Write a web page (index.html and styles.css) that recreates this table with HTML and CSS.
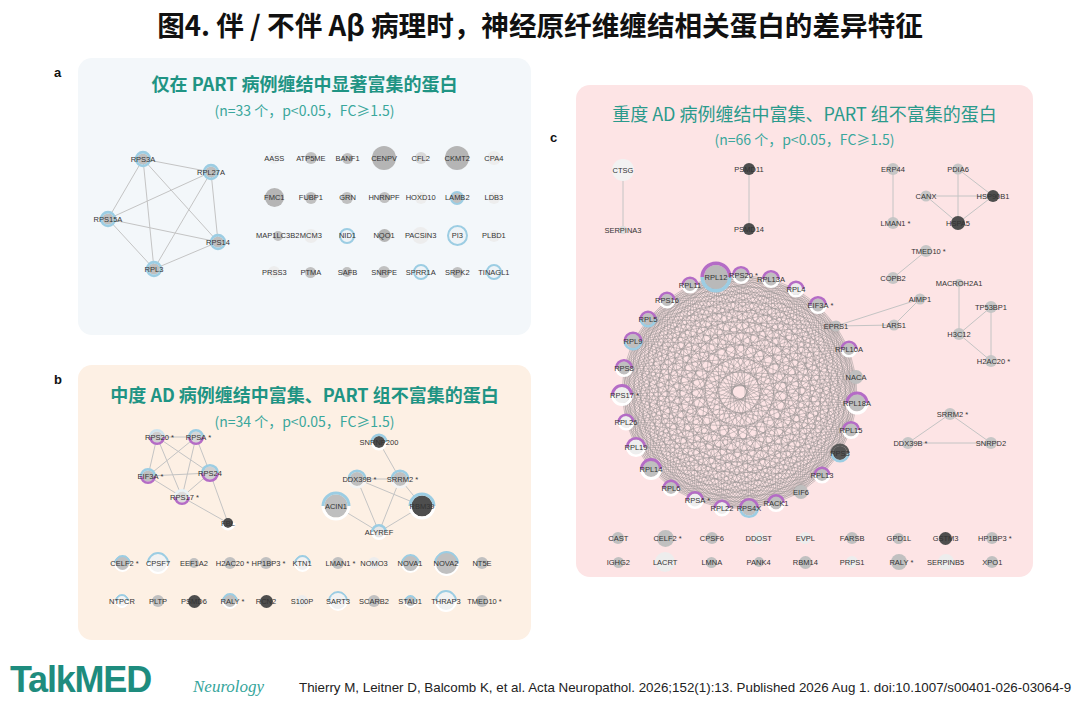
FILE: index.html
```html
<!DOCTYPE html>
<html lang="zh-CN">
<head>
<meta charset="utf-8">
<title>图4 伴/不伴 Aβ 病理时神经原纤维缠结相关蛋白的差异特征</title>
<link rel="stylesheet" href="styles.css">
</head>
<body>
<h1 class="fig-title">图4. 伴 / 不伴 Aβ 病理时，神经原纤维缠结相关蛋白的差异特征</h1>
<main class="figure">
  <div class="col col-left">
    <section class="panel">
      <span class="plabel">a</span>
      <div class="card card-a">
        <header class="card-head head-a">
          <h2 class="ptitle bold">仅在 PART 病例缠结中显著富集的蛋白</h2>
          <p class="psub">(n=33 个，p&lt;0.05，FC≥1.5)</p>
        </header>
        <div class="body-a">
          <svg class="net" id="net-a" width="178" height="215" viewBox="78 120 178 215"></svg>
          <div class="grid grid-a">
            <div class="node"><i class="dot f0 d12"></i><span>AASS</span></div>
            <div class="node"><i class="dot g d12"></i><span>ATP5ME</span></div>
            <div class="node"><i class="dot g d11"></i><span>BANF1</span></div>
            <div class="node"><i class="dot g2 d24"></i><span>CENPV</span></div>
            <div class="node"><i class="dot l d12"></i><span>CFL2</span></div>
            <div class="node"><i class="dot g2 d24"></i><span>CKMT2</span></div>
            <div class="node"><i class="dot f d14"></i><span>CPA4</span></div>
            <div class="node"><i class="dot g2 d19"></i><span>FMC1</span></div>
            <div class="node"><i class="dot g d12"></i><span>FUBP1</span></div>
            <div class="node"><i class="dot g d12"></i><span>GRN</span></div>
            <div class="node"><i class="dot g d11"></i><span>HNRNPF</span></div>
            <div class="node"><i class="dot f d12"></i><span>HOXD10</span></div>
            <div class="node"><i class="dot g ring d14"></i><span>LAMB2</span></div>
            <div class="node"><i class="dot f d12"></i><span>LDB3</span></div>
            <div class="node"><i class="dot g d10"></i><span>MAP1LC3B2</span></div>
            <div class="node"><i class="dot f d14"></i><span>MCM3</span></div>
            <div class="node"><i class="dot wb ring d16"></i><span>NID1</span></div>
            <div class="node"><i class="dot g2 d13"></i><span>NQO1</span></div>
            <div class="node"><i class="dot f d17"></i><span>PACSIN3</span></div>
            <div class="node"><i class="dot wb ring d21"></i><span>PI3</span></div>
            <div class="node"><i class="dot f d12"></i><span>PLBD1</span></div>
            <div class="node"><i class="dot f d12"></i><span>PRSS3</span></div>
            <div class="node"><i class="dot g d11"></i><span>PTMA</span></div>
            <div class="node"><i class="dot g d10"></i><span>SAFB</span></div>
            <div class="node"><i class="dot g d12"></i><span>SNRPE</span></div>
            <div class="node"><i class="dot wb ring d16"></i><span>SPRR1A</span></div>
            <div class="node"><i class="dot g d11"></i><span>SRPK2</span></div>
            <div class="node"><i class="dot wb ring d16"></i><span>TINAGL1</span></div>
          </div>
        </div>
      </div>
    </section>

    <section class="panel">
      <span class="plabel">b</span>
      <div class="card card-b">
        <header class="card-head head-b">
          <h2 class="ptitle bold">中度 AD 病例缠结中富集、PART 组不富集的蛋白</h2>
          <p class="psub">(n=34 个，p&lt;0.05，FC≥1.5)</p>
        </header>
        <svg class="net" id="net-b" width="453" height="113" viewBox="78 431 453 113"></svg>
        <div class="grid grid-b">
          <div class="node"><i class="dot g half d17"></i><span>CELF2<b class="star"> *</b></span></div>
          <div class="node"><i class="dot w half d22"></i><span>CPSF7</span></div>
          <div class="node"><i class="dot g d10"></i><span>EEF1A2</span></div>
          <div class="node"><i class="dot g d12"></i><span>H2AC20<b class="star"> *</b></span></div>
          <div class="node"><i class="dot g d12"></i><span>HP1BP3<b class="star"> *</b></span></div>
          <div class="node"><i class="dot w half d17"></i><span>KTN1</span></div>
          <div class="node"><i class="dot g d12"></i><span>LMAN1<b class="star"> *</b></span></div>
          <div class="node"><i class="dot f d12"></i><span>NOMO3</span></div>
          <div class="node"><i class="dot g half d19"></i><span>NOVA1</span></div>
          <div class="node"><i class="dot g half d25"></i><span>NOVA2</span></div>
          <div class="node"><i class="dot g d12"></i><span>NT5E</span></div>
          <div class="node"><i class="dot w half d14"></i><span>NTPCR</span></div>
          <div class="node"><i class="dot g d12"></i><span>PLTP</span></div>
          <div class="node"><i class="dot k d13"></i><span>PSMD6</span></div>
          <div class="node"><i class="dot g half d16"></i><span>RALY<b class="star"> *</b></span></div>
          <div class="node"><i class="dot k d13"></i><span>RCN2</span></div>
          <div class="node"><i class="dot f d12"></i><span>S100P</span></div>
          <div class="node"><i class="dot w half d20"></i><span>SART3</span></div>
          <div class="node"><i class="dot g d12"></i><span>SCARB2</span></div>
          <div class="node"><i class="dot g half d13"></i><span>STAU1</span></div>
          <div class="node"><i class="dot w half d22"></i><span>THRAP3</span></div>
          <div class="node"><i class="dot g d12"></i><span>TMED10<b class="star"> *</b></span></div>
        </div>
      </div>
    </section>
  </div>

  <div class="col col-right">
    <section class="panel">
      <span class="plabel plabel-c">c</span>
      <div class="card card-c">
        <header class="card-head head-c">
          <h2 class="ptitle">重度 AD 病例缠结中富集、PART 组不富集的蛋白</h2>
          <p class="psub">(n=66 个，p&lt;0.05，FC≥1.5)</p>
        </header>
        <svg class="net" id="net-c" width="457" height="377" viewBox="576 149 457 377"></svg>
        <div class="grid grid-c">
          <div class="node"><i class="dot g d12"></i><span>CAST</span></div>
          <div class="node"><i class="dot g d17"></i><span>CELF2<b class="star"> *</b></span></div>
          <div class="node"><i class="dot g d12"></i><span>CPSF6</span></div>
          <div class="node"><i class="dot f d12"></i><span>DDOST</span></div>
          <div class="node"><i class="dot f d12"></i><span>EVPL</span></div>
          <div class="node"><i class="dot g d12"></i><span>FARSB</span></div>
          <div class="node"><i class="dot g d11"></i><span>GPD1L</span></div>
          <div class="node"><i class="dot k d13"></i><span>GSTM3</span></div>
          <div class="node"><i class="dot g d12"></i><span>HP1BP3<b class="star"> *</b></span></div>
          <div class="node"><i class="dot g d11"></i><span>IGHG2</span></div>
          <div class="node"><i class="dot f d20"></i><span>LACRT</span></div>
          <div class="node"><i class="dot g d11"></i><span>LMNA</span></div>
          <div class="node"><i class="dot g d10"></i><span>PANK4</span></div>
          <div class="node"><i class="dot g d13"></i><span>RBM14</span></div>
          <div class="node"><i class="dot f d12"></i><span>PRPS1</span></div>
          <div class="node"><i class="dot g d16"></i><span>RALY<b class="star"> *</b></span></div>
          <div class="node"><i class="dot f d16"></i><span>SERPINB5</span></div>
          <div class="node"><i class="dot g d12"></i><span>XPO1</span></div>
        </div>
      </div>
    </section>
  </div>
</main>
<footer class="footer">
  <div class="logo">TalkMED</div>
  <div class="brand">Neurology</div>
  <p class="cite">Thierry M, Leitner D, Balcomb K, et al. Acta Neuropathol. 2026;152(1):13. Published 2026 Aug 1. doi:10.1007/s00401-026-03064-9</p>
</footer>
<script src="script.js"></script>
</body>
</html>
```

FILE: styles.css
```css
html, body {
  margin: 0;
  padding: 0;
  background: #ffffff;
}
body {
  width: 1080px;
  height: 714px;
  overflow: hidden;
  font-family: "Noto Sans CJK SC", "Noto Sans", sans-serif;
  color: #111;
}
.fig-title {
  margin: 0;
  height: 48px;
  line-height: 48px;
  text-align: center;
  font-size: 27.6px;
  font-weight: 700;
  color: #111;
}
.figure {
  display: flex;
  gap: 17px;
  margin-top: 10px;
  padding-left: 52px;
}
.col {
  display: flex;
  flex-direction: column;
}
.col-left { gap: 30px; }
.col-right { padding-top: 27px; }
.panel {
  display: flex;
}
.plabel {
  width: 24px;
  padding: 7px 0 0 2px;
  font: 700 13px/16px "Liberation Sans", Arial, sans-serif;
  color: #111;
}
.plabel-c {
  width: 26px;
  padding-top: 45px;
}
.card {
  box-sizing: border-box;
  border-radius: 14px;
  display: flex;
  flex-direction: column;
}
.card-a { width: 453px; height: 277px; background: #f3f7fa; }
.card-b { width: 453px; height: 275px; background: #fdf0e4; }
.card-c { width: 457px; height: 492px; background: #fde4e5; }

.card-head { text-align: center; }
.head-a { padding-top: 14px; height: 48px; }
.head-b { padding-top: 18px; height: 48px; }
.head-c { padding-top: 17px; height: 47px; }
.ptitle {
  margin: 0;
  font-size: 18px;
  line-height: 22px;
  font-weight: 400;
  color: #2a9a8c;
}
.ptitle.bold {
  font-weight: 700;
  color: #1f9484;
}
.psub {
  margin: 6px 0 0;
  font-size: 14px;
  line-height: 20px;
  color: #3aa79c;
}
.head-c .psub { margin-top: 5px; }

.net {
  display: block;
  overflow: visible;
  flex: none;
}
.body-a {
  display: flex;
}
.grid {
  display: grid;
}
.grid-a {
  padding-top: 18px;
  grid-template-columns: repeat(7, 36.6px);
  grid-template-rows: 40px 39px 37px 36px;
}
.grid-b {
  margin-left: 26px;
  grid-template-columns: repeat(11, 36px);
  grid-template-rows: repeat(2, 38px);
}
.grid-c {
  margin-left: 19px;
  grid-template-columns: repeat(9, 46.75px);
  grid-template-rows: repeat(2, 24px);
}
.node {
  display: grid;
  place-items: center;
}
.node > * {
  grid-area: 1 / 1;
}
.node span {
  position: relative;
  z-index: 1;
  font: 7.5px/9px "Liberation Sans", Arial, sans-serif;
  color: #333;
  white-space: nowrap;
}
.star {
  font-weight: 400;
  margin-right: -5px;
}
.dot {
  display: block;
  box-sizing: border-box;
  border-radius: 50%;
}
.g { background: #c0c0c0; }
.g2 { background: #b5b5b5; }
.l { background: #d9d9d9; }
.k { background: #4e4e4e; }
.f { background: #ededed; }
.f0 { background: #edf0f3; }
.w { background: #f2f2f2; }
.wb { background: #eef3f7; }
.ring { border: 2.6px solid #9ccde3; }
.half {
  border: 2.6px solid;
  border-color: #9ccde3 #9ccde3 #ffffff #ffffff;
  transform: rotate(-45deg);
}
.d10 { width: 10px; height: 10px; }
.d11 { width: 11px; height: 11px; }
.d12 { width: 12px; height: 12px; }
.d13 { width: 13px; height: 13px; }
.d14 { width: 14px; height: 14px; }
.d16 { width: 16px; height: 16px; }
.d17 { width: 17px; height: 17px; }
.d19 { width: 19px; height: 19px; }
.d20 { width: 20px; height: 20px; }
.d21 { width: 21px; height: 21px; }
.d22 { width: 22px; height: 22px; }
.d24 { width: 24px; height: 24px; }
.d25 { width: 25px; height: 25px; }

/* svg network parts */
.edge {
  stroke: #c4c4c4;
  stroke-width: 1;
}
.mesh {
  stroke: #979191;
  stroke-width: 0.6;
  stroke-opacity: 0.82;
}
.nl {
  font-family: "Liberation Sans", Arial, sans-serif;
  font-size: 7.5px;
  fill: #333;
  text-anchor: middle;
  dominant-baseline: central;
}
.nl.star-t { text-anchor: start; }

.footer {
  display: flex;
  align-items: baseline;
  margin-top: 20px;
  padding-left: 10px;
}
.logo {
  width: 183px;
  flex: none;
  font: 700 36px/40px "Liberation Sans", Arial, sans-serif;
  letter-spacing: -1.2px;
  color: #1e8c7e;
}
.brand {
  width: 106px;
  flex: none;
  font: italic 17px/18px "Liberation Serif", serif;
  color: #35a59b;
}
.cite {
  margin: 0;
  white-space: nowrap;
  font: 13.35px/16px "Liberation Sans", Arial, sans-serif;
  color: #222;
}
```

FILE: script.js
```js
(function () {
  var NS = 'http://www.w3.org/2000/svg';
  var G = '#bfbfbf', D = '#4e4e4e', W = '#ffffff', B = '#9ccde3', P = '#b46cc6';

  function el(tag, attrs, parent) {
    var e = document.createElementNS(NS, tag);
    for (var k in attrs) e.setAttribute(k, attrs[k]);
    parent.appendChild(e);
    return e;
  }

  function build(svgId, nodes, edges, meshNames) {
    var svg = document.getElementById(svgId);
    var map = {};
    nodes.forEach(function (n) { map[n[0]] = n; });
    var ge = el('g', {}, svg);
    if (meshNames) {
      for (var i = 0; i < meshNames.length; i++) {
        for (var j = i + 1; j < meshNames.length; j++) {
          var a = map[meshNames[i]], b = map[meshNames[j]];
          el('line', { x1: a[1], y1: a[2], x2: b[1], y2: b[2], 'class': 'mesh' }, ge);
        }
      }
    }
    edges.forEach(function (e) {
      var a = map[e[0]], b = map[e[1]];
      el('line', { x1: a[1], y1: a[2], x2: b[1], y2: b[2], 'class': 'edge' }, ge);
    });
    var gn = el('g', {}, svg);
    var gt = el('g', {}, svg);
    nodes.forEach(function (n) {
      var label = n[0], x = n[1], y = n[2], r = n[3], fill = n[4], top = n[5], bot = n[6];
      var sw = n[7] || 2.6;
      var rr = r + sw / 2;
      el('circle', { cx: x, cy: y, r: r, fill: fill }, gn);
      if (top) el('path', { d: 'M' + (x - rr) + ' ' + y + ' A' + rr + ' ' + rr + ' 0 0 1 ' + (x + rr) + ' ' + y, fill: 'none', stroke: top, 'stroke-width': sw }, gn);
      if (bot) el('path', { d: 'M' + (x + rr) + ' ' + y + ' A' + rr + ' ' + rr + ' 0 0 1 ' + (x - rr) + ' ' + y, fill: 'none', stroke: bot, 'stroke-width': sw }, gn);
      var star = / \*$/.test(label);
      var name = label.replace(/ \*$/, '');
      var t = el('text', { x: x, y: y, 'class': 'nl' }, gt);
      t.textContent = name;
      if (star) {
        var w = 0;
        try { w = t.getComputedTextLength(); } catch (err) { w = 0; }
        if (!w) w = name.length * 4.6;
        var s = el('text', { x: x + w / 2 + 2, y: y, 'class': 'nl star-t' }, gt);
        s.textContent = '*';
      }
    });
  }

  /* panel a */
  var aNodes = [
    ['RPS3A', 143, 159, 5.6, G, B, B],
    ['RPL27A', 211, 172, 5.6, G, B, B],
    ['RPS15A', 108, 219, 5.6, G, B, B],
    ['RPS14', 218, 242, 5.6, G, B, B],
    ['RPL3', 154, 269, 5.6, G, B, B]
  ];
  var aNames = aNodes.map(function (n) { return n[0]; });
  var aEdges = [];
  for (var i = 0; i < aNames.length; i++) for (var j = i + 1; j < aNames.length; j++) aEdges.push([aNames[i], aNames[j]]);
  build('net-a', aNodes, aEdges);

  /* panel b */
  var bNodes = [
    ['RPS20 *', 157, 437, 5.5, '#cfcfcf', '#cfe4ee', P],
    ['RPSA *', 196, 437, 5.5, '#d6d6d6', B, P],
    ['EIF3A *', 148, 476, 5.5, G, B, P],
    ['RPS24', 210, 473, 6.5, '#d0d0d0', B, P],
    ['RPS17 *', 182, 497, 5.5, '#dcdcdc', '#e8f2f6', P],
    ['FBL', 228, 523, 5, D, null, W],
    ['SNRNP200', 379, 442, 6, D, B, W],
    ['DDX39B *', 357, 479, 7, G, B, '#f4f4f4'],
    ['SRRM2 *', 400, 479, 7, G, B, '#f4f4f4'],
    ['ACIN1', 336, 506, 11.5, G, B, W, 3],
    ['RBM39', 422, 506, 10.5, D, B, W, 3],
    ['ALYREF', 379, 532, 5.5, '#e6e6e6', B, W]
  ];
  var bEdges = [
    ['RPS20 *', 'RPSA *'], ['RPS20 *', 'EIF3A *'], ['RPS20 *', 'RPS24'], ['RPS20 *', 'RPS17 *'],
    ['RPSA *', 'EIF3A *'], ['RPSA *', 'RPS17 *'], ['RPSA *', 'RPS24'], ['RPS24', 'FBL'],
    ['EIF3A *', 'RPS24'], ['EIF3A *', 'RPS17 *'], ['RPS24', 'RPS17 *'], ['RPS17 *', 'FBL'],
    ['SNRNP200', 'SRRM2 *'], ['DDX39B *', 'SRRM2 *'], ['DDX39B *', 'RBM39'], ['DDX39B *', 'ALYREF'],
    ['SRRM2 *', 'RBM39'], ['SRRM2 *', 'ALYREF'], ['ACIN1', 'ALYREF'], ['RBM39', 'ALYREF']
  ];
  build('net-b', bNodes, bEdges);

  /* panel c */
  var ring = [
    ['RPL12', 716, 277, 12, '#b9b9b9', P, B, 3.6],
    ['RPS20 *', 741, 275, 6.5, G, P, W],
    ['RPL13A', 771, 279, 6.5, G, P, W],
    ['RPL4', 796, 289, 6, '#ececec', P, W],
    ['EIF3A *', 818, 305, 6.5, G, P, W],
    ['EPRS1', 836, 326, 5.5, G],
    ['RPL10A', 849, 349, 6, G, P, W],
    ['NACA', 856, 377, 7, G],
    ['RPL18A', 857, 403, 8.5, G, P, W, 3],
    ['RPL15', 851, 430, 6.5, G, P, W],
    ['RPS3', 840, 453, 7, '#555555', '#5a5a5a', B],
    ['RPL13', 822, 475, 6, G, P, W],
    ['EIF6', 801, 492, 7, G],
    ['RACK1', 776, 503, 6.5, G, P, W],
    ['RPS4X', 749, 508, 7.5, G, P, B],
    ['RPL22', 722, 508, 6, '#ececec', P, W],
    ['RPSA *', 695, 500, 6.5, '#eeeeee', P, W],
    ['RPL6', 671, 488, 6, G, P, W],
    ['RPL14', 651, 469, 8, G, P, W, 3],
    ['RPL19', 636, 447, 7.5, '#eeeeee', P, W],
    ['RPL26', 626, 422, 6, '#eeeeee', P, W],
    ['RPS17 *', 622, 395, 8, '#eeeeee', P, W, 3],
    ['RPS8', 624, 368, 6.5, G, P, W],
    ['RPL9', 633, 341, 7, G, P, B],
    ['RPL5', 648, 319, 6, G, P, B],
    ['RPS16', 667, 300, 6, G, P, W],
    ['RPL11', 690, 285, 6, G, P, W]
  ];
  var others = [
    ['CTSG', 623, 170, 11, '#f2f2f2'],
    ['SERPINA3', 623, 230, 4, '#dddddd'],
    ['PSMD11', 749, 169, 6, D],
    ['PSMD14', 749, 229, 6, D],
    ['ERP44', 893, 169, 6, '#c6c6c6'],
    ['LMAN1 *', 893, 223, 6, '#c6c6c6'],
    ['PDIA6', 958, 169, 5.5, '#c6c6c6'],
    ['CANX', 926, 196, 5.5, '#c6c6c6'],
    ['HSP90B1', 993, 196, 6, D],
    ['HSPA5', 958, 223, 7, D],
    ['TMED10 *', 926, 251, 6, '#c6c6c6'],
    ['COPB2', 893, 278, 6, '#c6c6c6'],
    ['AIMP1', 920, 299, 5.5, '#c6c6c6'],
    ['LARS1', 894, 325, 5.5, '#c6c6c6'],
    ['MACROH2A1', 959, 283, 4, '#c6c6c6'],
    ['TP53BP1', 991, 307, 6, '#c6c6c6'],
    ['H3C12', 959, 334, 6, '#c6c6c6'],
    ['H2AC20 *', 991, 361, 6, '#c6c6c6'],
    ['SRRM2 *', 950, 414, 6, '#c6c6c6'],
    ['DDX39B *', 908, 443, 6, '#c6c6c6'],
    ['SNRPD2', 991, 443, 6, '#c6c6c6']
  ];
  var cEdges = [
    ['CTSG', 'SERPINA3'], ['PSMD11', 'PSMD14'], ['ERP44', 'LMAN1 *'],
    ['PDIA6', 'HSPA5'], ['PDIA6', 'HSP90B1'], ['CANX', 'HSP90B1'], ['CANX', 'HSPA5'], ['HSPA5', 'HSP90B1'],
    ['TMED10 *', 'COPB2'], ['EPRS1', 'AIMP1'], ['EPRS1', 'LARS1'], ['AIMP1', 'LARS1'],
    ['MACROH2A1', 'H3C12'], ['TP53BP1', 'H3C12'], ['TP53BP1', 'H2AC20 *'], ['H3C12', 'H2AC20 *'],
    ['SRRM2 *', 'DDX39B *'], ['SRRM2 *', 'SNRPD2'], ['DDX39B *', 'SNRPD2']
  ];
  build('net-c', ring.concat(others), cEdges, ring.map(function (n) { return n[0]; }));
})();
```
